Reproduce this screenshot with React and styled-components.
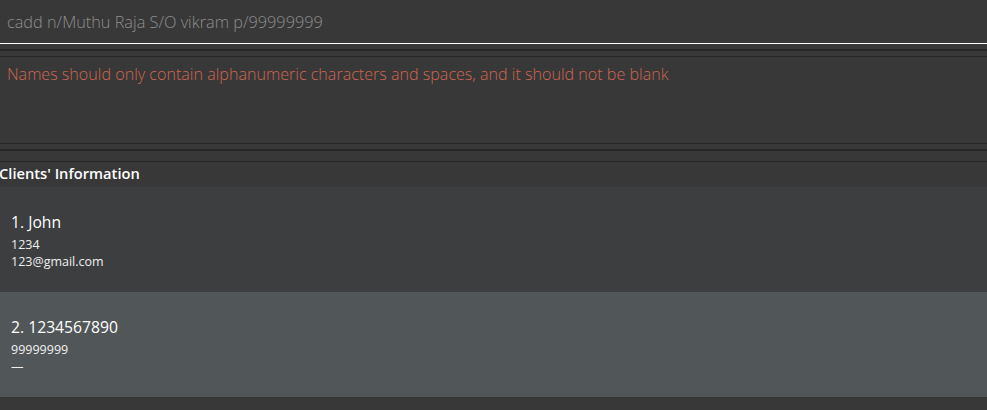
import React from "react";
import styled, { createGlobalStyle } from "styled-components";

const Global = createGlobalStyle`
  html, body { margin: 0; padding: 0; background: #383838; }
  body { font-family: "Open Sans", "Noto Sans", sans-serif; overflow: hidden; }
  * { box-sizing: border-box; }
`;

const Window = styled.div`
  width: 987px;
  height: 410px;
  background: #383838;
  display: flex;
  flex-direction: column;
  overflow: hidden;
`;

const CommandBox = styled.div`
  height: 44px;
  border-bottom: 1px solid #ffffff;
  padding: 0 7px;
  display: flex;
  align-items: center;
  font-size: 16.3px;
  font-weight: 300;
  color: #8e8e8e;
  white-space: nowrap;
`;

const Divider = styled.div`
  height: ${(p) => p.$h}px;
  flex: none;
  border-bottom: ${(p) => p.$line}px solid #262626;
`;

const ResultBox = styled.div`
  height: 88px;
  flex: none;
  border-top: 1px solid #262626;
  border-bottom: 1px solid #262626;
  padding: 6px 7px;
  font-size: 16.1px;
  font-weight: 300;
  color: #d06651;
  white-space: nowrap;
`;

const Header = styled.div`
  height: 26px;
  flex: none;
  border-top: 1px solid #262626;
  margin-left: -1px;
  padding-bottom: 3px;
  display: flex;
  align-items: center;
  font-size: 14.7px;
  font-weight: 600;
  color: #ffffff;
`;

const List = styled.div`
  display: flex;
  flex-direction: column;
`;

const Card = styled.div`
  height: 105px;
  flex: none;
  background: ${(p) => (p.$odd ? "#515658" : "#3c3e3f")};
  padding: 24px 11px 0;
  display: flex;
  flex-direction: column;
  color: #ffffff;
`;

const Name = styled.div`
  font-size: 15.7px;
  font-weight: 500;
  line-height: 22px;
  margin-bottom: 3px;
`;

const Field = styled.div`
  font-size: 12.5px;
  line-height: 17px;
  color: #f0f0f0;
`;

const clients = [
  { name: "John", phone: "1234", email: "123@gmail.com" },
  { name: "1234567890", phone: "99999999", email: "—" },
];

export default function App() {
  return (
    <Window>
      <Global />
      <CommandBox>cadd n/Muthu Raja S/O vikram p/99999999</CommandBox>
      <Divider $h={7} $line={2} />
      <Divider $h={5} $line={0} />
      <ResultBox>
        Names should only contain alphanumeric characters and spaces, and it should not be blank
      </ResultBox>
      <Divider $h={7} $line={2} />
      <Divider $h={10} $line={0} />
      <Header>Clients' Information</Header>
      <List>
        {clients.map((c, i) => (
          <Card key={i} $odd={i % 2 === 1}>
            <Name>
              {i + 1}. {c.name}
            </Name>
            <Field>{c.phone}</Field>
            <Field>{c.email}</Field>
          </Card>
        ))}
      </List>
    </Window>
  );
}
